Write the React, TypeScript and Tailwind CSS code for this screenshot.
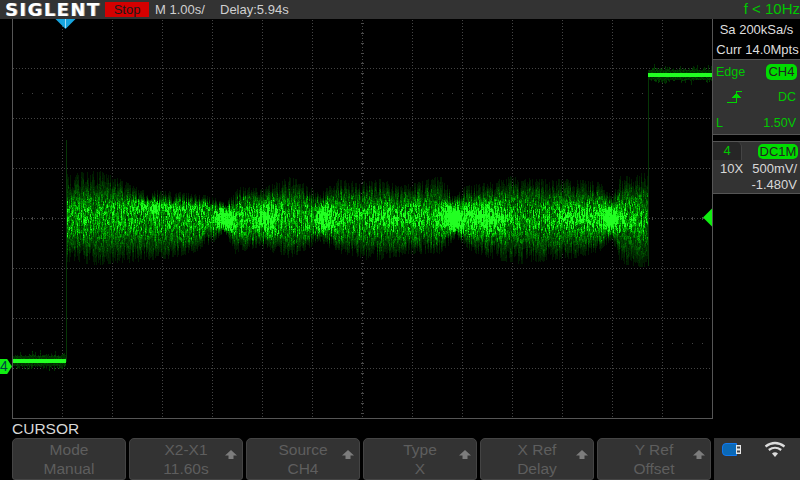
import { useMemo } from "react";

const SANS = "font-['Liberation_Sans',Arial,sans-serif]";

// envelope of the noise, read off the reference: [x, y]
const TOP = [[66,174],[100,172],[120,180],[140,190],[180,193],[210,197],[225,204],[240,187],[260,190],[290,177],[320,194],[335,180],[360,183],[380,180],[400,187],[440,177],[455,197],[465,187],[490,183],[510,177],[540,180],[570,180],[600,183],[612,197],[620,177],[648,173]];
const BOTTOM = [[66,260],[100,264],[140,260],[170,257],[190,253],[210,243],[225,232],[235,253],[260,247],[290,257],[320,241],[340,253],[375,260],[410,253],[440,253],[455,237],[470,250],[490,257],[520,263],[545,260],[575,257],[600,250],[612,238],[620,263],[648,267]];

// bright patches in the trace
const HOT = [
  { x: 165, y: 206, hx: 55, hy: 6, s: 0.35 },
  { x: 226, y: 219, hx: 9, hy: 9, s: 1.4 },
  { x: 150, y: 207, hx: 8, hy: 8, s: 0.3 },
  { x: 267, y: 218, hx: 12, hy: 12, s: 0.7 },
  { x: 325, y: 218, hx: 9, hy: 11, s: 0.9 },
  { x: 390, y: 216, hx: 40, hy: 10, s: 0.25 },
  { x: 452, y: 218, hx: 11, hy: 10, s: 1.3 },
  { x: 472, y: 217, hx: 12, hy: 12, s: 0.6 },
  { x: 495, y: 218, hx: 10, hy: 12, s: 0.55 },
  { x: 580, y: 217, hx: 25, hy: 11, s: 0.35 },
  { x: 612, y: 218, hx: 8, hy: 10, s: 1.2 },
];

const RAMP = ["#001c00", "#002e00", "#004400", "#005e00", "#007c00", "#009c00", "#00be00", "#0ce40c", "#22ff22"];

function makeRandom(seed: number) {
  return () => {
    seed = (seed + 0x6d2b79f5) | 0;
    let t = Math.imul(seed ^ (seed >>> 15), 1 | seed);
    t = (t + Math.imul(t ^ (t >>> 7), 61 | t)) ^ t;
    return ((t ^ (t >>> 14)) >>> 0) / 4294967296;
  };
}

function interp(points: number[][], x: number) {
  for (let i = 1; i < points.length; i++) {
    if (x <= points[i][0]) {
      const [x0, y0] = points[i - 1];
      const [x1, y1] = points[i];
      return y0 + ((y1 - y0) * (x - x0)) / (x1 - x0);
    }
  }
  return points[points.length - 1][1];
}

function useWavePaths() {
  return useMemo(() => {
    const rnd = makeRandom(4711);
    const paths: string[] = RAMP.map(() => "");
    const put = (x: number, y: number, v: number) => {
      const level = Math.min(RAMP.length - 1, Math.floor(v * RAMP.length));
      if (level >= 0) paths[level] += `M${x} ${y}h1v1h-1z`;
    };
    for (let x = 66; x < 648; x++) {
      const r1 = rnd();
      const r2 = rnd();
      const envTop = interp(TOP, x);
      const envBottom = interp(BOTTOM, x);
      // spikes shrink where the band is narrow, so it never breaks in two
      const spike = Math.min(16, (envBottom - envTop) * 0.2);
      const top = envTop + r1 * r1 * spike - 1;
      const bottom = envBottom - r2 * r2 * spike + 1;
      const offset = Math.floor(rnd() * 4);
      const streak = (x % 2 === 0 ? 0.8 : 1) * (0.8 + rnd() * 0.4);
      let cell = -1;
      let cellValue = 1;
      for (let y = Math.round(top); y < bottom; y++) {
        // vertical blobs a few pixels tall, so the noise looks like strokes and not like grain
        const c = Math.floor((y + offset) / 4);
        if (c !== cell) {
          cell = c;
          cellValue = 0.4 + rnd() * 1.0;
        }
        const dy0 = (y - 218) / 27;
        const edge = Math.min(1, Math.min(y - top, bottom - y) / 9);
        let v = 0.6 * Math.exp(-dy0 * dy0) * edge * streak + 0.09 * edge + 0.02;
        for (const h of HOT) {
          const dx = (x - h.x) / h.hx;
          const dy = (y - h.y) / h.hy;
          v += h.s * Math.exp(-(dx * dx + dy * dy));
        }
        v *= cellValue * (0.75 + rnd() * 0.5);
        put(x, y, v);
      }
    }
    // noise halo round the two flat traces
    const halo = (from: number, to: number, y0: number) => {
      for (let x = from; x < to; x++) {
        const up = 3 + Math.floor(rnd() * rnd() * 8);
        const down = 3 + Math.floor(rnd() * rnd() * 6);
        for (let y = y0 - up; y < y0 + 4 + down; y++) put(x, y, 0.1 + rnd() * 0.16);
      }
    };
    halo(13, 66, 359);
    halo(648, 712, 73);
    return paths;
  }, []);
}

function Grid() {
  const xs = Array.from({ length: 13 }, (_, i) => 62 + i * 50);
  const ys = [68, 118, 168, 218, 268, 318, 368];
  const dots = Array.from({ length: 70 }, (_, i) => 22 + i * 10).filter((x) => (x - 12) % 50 !== 0);
  const ticksY = Array.from({ length: 40 }, (_, i) => 23 + i * 10).filter((y) => (y - 18) % 50 !== 0);
  return (
    <g shapeRendering="crispEdges">
      {xs.map((x) => (
        <line key={x} x1={x + 0.5} x2={x + 0.5} y1={20} y2={418} stroke="#444" strokeDasharray="1 2" />
      ))}
      {ys.map((y) => (
        <line key={y} x1={13} x2={712} y1={y + 0.5} y2={y + 0.5} stroke="#444" strokeDasharray="1 2" />
      ))}
      {[93, 343].map((y) =>
        dots.map((x) => <rect key={`${x}-${y}`} x={x} y={y} width={1} height={1} fill="#444" />),
      )}
      {dots.map((x) => (
        <rect key={x} x={x} y={217} width={1} height={3} fill="#4a4a4a" />
      ))}
      {ticksY.map((y) => (
        <rect key={y} x={361} y={y} width={3} height={1} fill="#4a4a4a" />
      ))}
    </g>
  );
}

function Waveform() {
  const paths = useWavePaths();
  return (
    <svg viewBox="13 19 699 399" className="block w-[699px] h-[399px]">
      <Grid />
      <g shapeRendering="crispEdges">
        {paths.map((d, i) => (
          <path key={i} d={d} fill={RAMP[i]} />
        ))}
        <rect x={66} y={140} width={1} height={222} fill="#063606" />
        <rect x={648} y={74} width={1} height={192} fill="#063606" />
        <rect x={13} y={359} width={53} height={4} fill="#22ff22" />
        <rect x={648} y={73} width={64} height={4} fill="#22ff22" />
      </g>
      {/* time marker */}
      <polygon points="55.5,19 75.5,19 65.5,29" fill="#17a5df" />
      <rect x={65} y={19} width={1} height={9} fill="#9fdcf5" />
      {/* trigger level */}
      <polygon points="712,208.5 712,226.5 703,217.5" fill="#11ee11" />
    </svg>
  );
}

function Logo() {
  return (
    <span className="ml-[5px] w-[96px] font-['DejaVu_Sans',sans-serif] font-bold text-[18px] leading-[19px] tracking-[1.4px] text-white [text-shadow:1px_0_0_#999]">
      SIGLENT
    </span>
  );
}

function UpArrow() {
  return (
    <svg viewBox="0 0 12 9" className="w-3 h-[9px] shrink-0">
      <path d="M6 0 L12 5.5 H8.5 V9 H3.5 V5.5 H0 Z" fill="#7c7c7c" />
    </svg>
  );
}

function SoftKey({ top, bottom, arrow = true }: { top: string; bottom: string; arrow?: boolean }) {
  return (
    <div className="w-[114px] h-[42px] relative flex flex-col items-center justify-center rounded-t-[5px] rounded-b-[3px] border border-[#444] bg-[#333] text-[15.5px] leading-[19px] text-[#5e5e5e]">
      <div>{top}</div>
      <div>{bottom}</div>
      {arrow && (
        <div className="absolute right-[5px] top-[11px]">
          <UpArrow />
        </div>
      )}
    </div>
  );
}

function EdgeIcon() {
  return (
    <svg viewBox="0 0 15 12" className="w-[15px] h-3" shapeRendering="crispEdges">
      <path d="M0 11.5 H9.5 V0.5 H15" fill="none" stroke="#00d800" strokeWidth="1" />
      <polygon points="5,7 14,7 9.5,2" fill="#00d800" />
    </svg>
  );
}

function Usb() {
  return (
    <svg viewBox="0 0 20 13" className="w-5 h-[13px]">
      <path d="M4 .5 H14.5 V12.5 H4 Q.5 12.5 .5 9 V4 Q.5 .5 4 .5 Z" fill="#0b69b7" stroke="#1078f0" />
      <rect x="14" y="2" width="5" height="9" fill="#e8e8e8" />
      <rect x="15" y="3.5" width="3" height="2" fill="#444" />
      <rect x="15" y="7.5" width="3" height="2" fill="#444" />
    </svg>
  );
}

function Wifi() {
  return (
    <svg viewBox="0 0 22 17" className="w-[22px] h-[17px]">
      <g fill="none" stroke="#dcdcdc" strokeWidth="2.2">
        <path d="M1.5 5.5 Q11 -1.5 20.5 5.5" />
        <path d="M4.8 9 Q11 4.5 17.2 9" />
      </g>
      <path d="M8 12.5 Q11 10.2 14 12.5 L11 16 Z" fill="#dcdcdc" />
    </svg>
  );
}

export default function App() {
  return (
    <div className={`w-[800px] h-[480px] bg-black overflow-hidden flex flex-col ${SANS}`}>
      {/* Top bar */}
      <div className="h-[19px] shrink-0 flex items-center bg-[#333] text-[13px] text-[#d0d0d0]">
        <Logo />
        <div className="ml-[4px] w-[44px] h-[15px] bg-[#d40000] text-[#1a1a1a] text-center leading-[16px]">Stop</div>
        <span className="ml-[6px] w-[65px]">M 1.00s/</span>
        <span>Delay:5.94s</span>
        <span className="ml-auto text-[15px] text-[#00c800]">f &lt; 10Hz</span>
      </div>

      <div className="h-[400px] shrink-0 flex">
        {/* CH4 ground marker */}
        <div className="w-3 shrink-0 relative">
          <div className="absolute left-0 top-[340px] w-3 h-[15px] bg-[#11ee11] [clip-path:polygon(0_0,60%_0,100%_50%,60%_100%,0_100%)] text-[14px] leading-[15px] text-[#044]">
            4
          </div>
        </div>

        {/* Plot */}
        <div className="w-[701px] h-[400px] shrink-0 border-l border-r border-b border-[#555]">
          <Waveform />
        </div>

        {/* Right column */}
        <div className="flex-1 flex flex-col text-[13px] leading-[16px]">
          <div className="h-[40px] pt-[1px] flex flex-col items-center justify-center gap-[4px] text-[#dedede]">
            <div>Sa 200kSa/s</div>
            <div className="pl-[2px] whitespace-nowrap">Curr 14.0Mpts</div>
          </div>

          <div className="h-[76px] bg-[#333] border-y border-[#555] pl-[3px] pr-[3px] pt-[3px] flex flex-col text-[12.5px] text-[#00c800]">
            <div className="flex items-center justify-between h-[17px]">
              <span>Edge</span>
              <span className="w-[31px] h-[16px] rounded-[5px] bg-[#00dc00] text-[13px] text-[#222] text-center">CH4</span>
            </div>
            <div className="flex items-center justify-between h-[27px] pl-[11px] pt-[7px] pr-[1px]">
              <EdgeIcon />
              <span>DC</span>
            </div>
            <div className="flex items-center justify-between h-[24px] pt-[7px] pr-[1px]">
              <span>L</span>
              <span>1.50V</span>
            </div>
          </div>

          <div className="mt-[6px] h-[53px] bg-[#333] border-y border-[#555] text-[#d8d8d8]">
            <div className="flex h-[18px]">
              <div className="w-[29px] bg-[#262626] rounded-tr-[5px] border-r border-[#444] text-center text-[#00c800] leading-[17px]">4</div>
              <div className="ml-auto mr-[2px] mt-[2px] w-[40px] h-[15px] rounded-[5px] bg-[#00dc00] text-[#222] text-center leading-[15px]">DC1M</div>
            </div>
            <div className="flex justify-between pl-[7px] pr-[3px] h-[17px] items-center">
              <span>10X</span>
              <span>500mV/</span>
            </div>
            <div className="text-right pr-[3px] leading-[15px]">-1.480V</div>
          </div>
        </div>
      </div>

      {/* Softkey menu */}
      <div className="h-[19px] shrink-0 pl-3 pt-[1px] text-[15.5px] leading-[18px] text-[#d8d8d8]">CURSOR</div>
      <div className="h-[42px] shrink-0 flex pl-3">
        <div className="flex gap-[3px]">
          <SoftKey top="Mode" bottom="Manual" arrow={false} />
          <SoftKey top="X2-X1" bottom="11.60s" />
          <SoftKey top="Source" bottom="CH4" />
          <SoftKey top="Type" bottom="X" />
          <SoftKey top="X Ref" bottom="Delay" />
          <SoftKey top="Y Ref" bottom="Offset" />
        </div>
        <div className="ml-[3px] flex-1 bg-[#333] flex items-start pt-[3px] pl-[8px] gap-[22px]">
          <div className="pt-[2px]">
            <Usb />
          </div>
          <Wifi />
        </div>
      </div>
    </div>
  );
}
